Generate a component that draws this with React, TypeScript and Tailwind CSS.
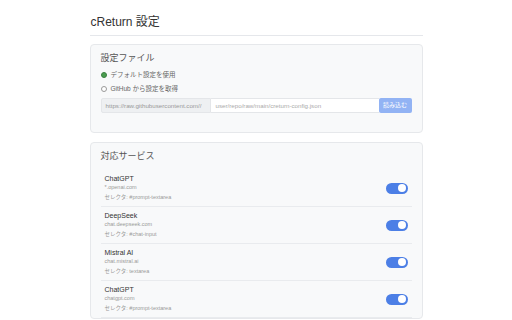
const font = { fontFamily: '"Liberation Sans", "Noto Sans CJK JP", sans-serif' };

interface Service {
  name: string;
  domain: string;
  selector: string;
}

const services: Service[] = [
  { name: "ChatGPT", domain: "*.openai.com", selector: "#prompt-textarea" },
  { name: "DeepSeek", domain: "chat.deepseek.com", selector: "#chat-input" },
  { name: "Mistral AI", domain: "chat.mistral.ai", selector: "textarea" },
  { name: "ChatGPT", domain: "chatgpt.com", selector: "#prompt-textarea" },
];

const Toggle = () => (
  <div className="w-[22px] h-[11px] rounded-full bg-[#4c7fe6] flex items-center justify-end pr-[1.5px]">
    <div className="w-[8px] h-[8px] rounded-full bg-white" />
  </div>
);

const ServiceRow = ({ s }: { s: Service }) => (
  <div className="flex items-center justify-between border-b border-[#e9ebee] pl-[4px] pr-[4px] h-[37px]">
    <div className="flex flex-col">
      <span className="text-[7px] leading-[9px] text-[#333]">{s.name}</span>
      <span className="text-[5.5px] leading-[9px] text-[#999]">{s.domain}</span>
      <span className="text-[5.5px] leading-[10px] text-[#999]">セレクタ: {s.selector}</span>
    </div>
    <Toggle />
  </div>
);

export default function App() {
  return (
    <div className="w-[512px] h-[320px] overflow-hidden bg-white" style={font}>
      <div className="w-[333px] mx-auto pt-[14px]">
        <div className="border-b border-[#e5e7eb] pb-[5px] pl-[1px]">
          <h1 className="text-[12px] leading-[16px] text-[#333]">cReturn 設定</h1>
        </div>

        <div className="mt-[8px] rounded-[4px] border border-[#e6e8eb] bg-[#f8f9fa] px-[10px] pt-[7px] pb-[19px]">
          <h2 className="text-[9px] leading-[12px] text-[#555]">設定ファイル</h2>
          <div className="mt-[7px] flex flex-col gap-[6px]">
            <label className="flex items-center gap-[4px] text-[6.5px] leading-[8px] text-[#666]">
              <span className="w-[6px] h-[6px] rounded-full bg-[#4a9d4f] border border-[#3a8040]" />
              デフォルト設定を使用
            </label>
            <label className="flex items-center gap-[4px] text-[6.5px] leading-[8px] text-[#666]">
              <span className="w-[6px] h-[6px] rounded-full bg-white border border-[#999]" />
              GitHub から設定を取得
            </label>
          </div>
          <div className="mt-[5px] flex h-[15px]">
            <div className="w-[110px] bg-[#eef0f2] border border-[#e4e6e9] rounded-l-[2px] flex items-center pl-[4px] text-[6.2px] text-[#999] whitespace-nowrap overflow-hidden">
              https://raw.githubusercontent.com//
            </div>
            <div className="flex-1 bg-white border-y border-[#e4e6e9] flex items-center pl-[5px] text-[6.2px] text-[#aaa]">
              user/repo/raw/main/creturn-config.json
            </div>
            <div className="w-[33px] bg-[#92b3f4] rounded-[2px] flex items-center justify-center text-[6px] text-white">
              読み込む
            </div>
          </div>
        </div>

        <div className="mt-[9px] rounded-[4px] border border-[#e6e8eb] bg-[#f8f9fa] px-[10px] pt-[7px]">
          <h2 className="text-[9px] leading-[12px] text-[#555]">対応サービス</h2>
          <div className="mt-[8px] flex flex-col">
            {services.map((s, i) => (
              <ServiceRow key={i} s={s} />
            ))}
          </div>
        </div>
      </div>
    </div>
  );
}
